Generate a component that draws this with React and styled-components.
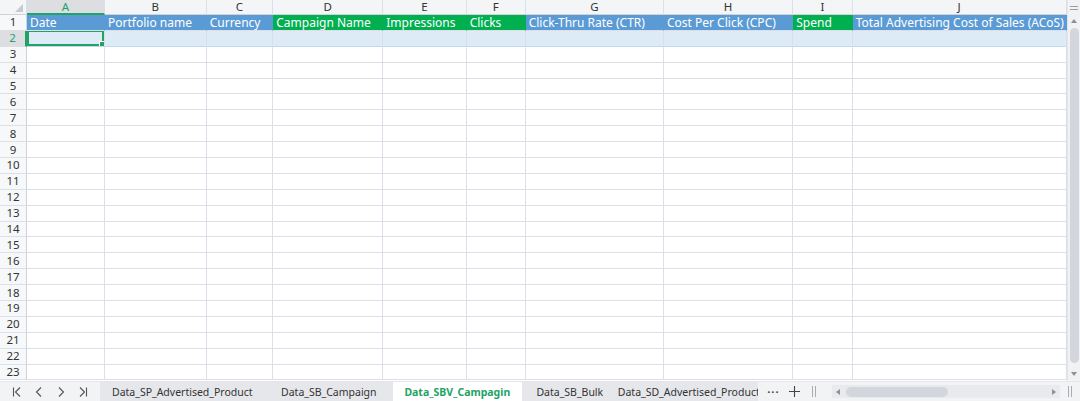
import React from 'react';
import styled, { createGlobalStyle } from 'styled-components';

const GlobalStyle = createGlobalStyle`
  html, body { margin: 0; padding: 0; background: #fff; }
  body { font-family: "Noto Sans", "Noto Sans CJK SC", "Liberation Sans", sans-serif; }
  * { box-sizing: border-box; }
`;

const BLUE = '#5b9bd5';
const GREEN = '#00b050';
const ACCENT = '#21a366';
const LINE = '#dcdfe8';

const columns = [
  { key: 'A', width: 78, title: 'Date', fill: BLUE },
  { key: 'B', width: 101.7, title: 'Portfolio name', fill: BLUE },
  { key: 'C', width: 66.6, title: 'Currency', fill: BLUE },
  { key: 'D', width: 110, title: 'Campaign Name', fill: GREEN },
  { key: 'E', width: 83.4, title: 'Impressions', fill: GREEN },
  { key: 'F', width: 59, title: 'Clicks', fill: GREEN },
  { key: 'G', width: 138.3, title: 'Click-Thru Rate (CTR)', fill: BLUE },
  { key: 'H', width: 129.3, title: 'Cost Per Click (CPC)', fill: BLUE },
  { key: 'I', width: 59.4, title: 'Spend', fill: GREEN },
  { key: 'J', width: 214, title: 'Total Advertising Cost of Sales (ACoS)', fill: BLUE },
];

// last tab is cut off by the tools area, so it is left aligned
const tabs = [
  { name: 'Data_SP_Advertised_Product', w: 165 },
  { name: 'Data_SB_Campaign', w: 128 },
  { name: 'Data_SBV_Campagin', w: 129, active: true },
  { name: 'Data_SB_Bulk', w: 96 },
  { name: 'Data_SD_Advertised_Product', w: 142, start: true },
];

const ROWS = 23;

const Page = styled.div`
  width: 1080px;
  height: 401px;
  display: flex;
  flex-direction: column;
  overflow: hidden;
`;

const SheetArea = styled.div`
  flex: 1;
  display: flex;
  min-height: 0;
`;

const Grid = styled.div`
  flex: 1;
  display: grid;
  grid-template-columns: 27px ${columns.map(c => c.width + 'px').join(' ')};
  grid-template-rows: 15px repeat(${ROWS}, 15.9px);
  overflow: hidden;
  font-size: 12px;
`;

const Corner = styled.div`
  background: #f4f5f7;
  border-right: 1px solid ${LINE};
  border-bottom: 1px solid #cfd2d8;
  position: relative;
  &::after {
    content: '';
    position: absolute;
    right: 3px;
    bottom: 2px;
    border-left: 8px solid transparent;
    border-bottom: 8px solid #c8cacf;
  }
`;

const ColHead = styled.div`
  background: ${p => (p.$selected ? '#dcdee2' : '#f4f5f7')};
  color: ${p => (p.$selected ? ACCENT : '#333')};
  border-right: 1px solid ${LINE};
  border-bottom: ${p => (p.$selected ? `2px solid ${ACCENT}` : '1px solid #cfd2d8')};
  display: flex;
  align-items: center;
  justify-content: center;
  line-height: 14px;
  font-size: 11.5px;
`;

const RowHead = styled.div`
  background: ${p => (p.$selected ? '#dcdee2' : '#f7f8fa')};
  color: ${p => (p.$selected ? ACCENT : '#333')};
  border-right: ${p => (p.$selected ? `2px solid ${ACCENT}` : `1px solid #cfd2d8`)};
  border-bottom: 1px solid ${LINE};
  display: flex;
  align-items: center;
  justify-content: center;
  font-size: 11.5px;
  line-height: 14px;
`;

const Cell = styled.div`
  background: ${p => p.$fill || '#fff'};
  color: #fff;
  border-right: 1px solid ${p => (p.$fill && p.$head ? p.$fill : LINE)};
  border-bottom: 1px solid ${p => (p.$fill && !p.$head ? '#c5d9ec' : LINE)};
  padding: 0 3px;
  display: flex;
  align-items: center;
  white-space: nowrap;
  overflow: hidden;
  font-size: 12px;
  line-height: 15px;
  position: relative;
`;

const Selection = styled.div`
  position: absolute;
  inset: -1px 0 0 0;
  border: 2px solid ${ACCENT};
  &::after {
    content: '';
    position: absolute;
    right: -3px;
    bottom: -3px;
    width: 4px;
    height: 4px;
    background: ${ACCENT};
    border: 1px solid #fff;
  }
`;

const VScroll = styled.div`
  width: 13px;
  background: #f1f2f4;
  border-left: 1px solid #e3e5ea;
  display: flex;
  flex-direction: column;
  align-items: center;
`;

const ScrollMenu = styled.div`
  height: 15px;
  width: 100%;
  display: flex;
  flex-direction: column;
  justify-content: center;
  gap: 2px;
  padding: 0 2px;
  & > span { height: 1px; background: #9a9da4; display: block; }
`;

const ArrowBox = styled.div`
  height: ${p => p.$h || 12}px;
  display: flex;
  align-items: center;
  justify-content: center;
`;

const VThumb = styled.div`
  flex: 1;
  width: 9px;
  margin: 1px 0 4px;
  background: #d3d6dc;
  border-radius: 5px;
`;

const TabBar = styled.div`
  height: 20px;
  background: #f2f3f5;
  display: flex;
  align-items: stretch;
  font-size: 10.5px;
  color: #333;
  border-top: 1px solid #e4e6ea;
`;

const NavGroup = styled.div`
  width: 100px;
  display: flex;
  align-items: center;
  padding-left: 11px;
  gap: 10px;
`;

const NavBtn = styled.svg`
  width: 12px;
  height: 12px;
  stroke: #555;
  fill: none;
  stroke-width: 1.1;
`;

const Tabs = styled.div`
  display: flex;
  background: #e6e7eb;
  width: 660px;
  overflow: hidden;
`;

const Tab = styled.div`
  flex: 0 0 ${p => p.$w}px;
  display: flex;
  align-items: center;
  justify-content: ${p => (p.$start ? 'flex-start' : 'center')};
  white-space: nowrap;
  overflow: hidden;
  background: ${p => (p.$active ? '#fff' : 'transparent')};
  color: ${p => (p.$active ? ACCENT : '#333')};
  font-weight: ${p => (p.$active ? 700 : 400)};
`;

const TabTools = styled.div`
  display: flex;
  align-items: center;
  padding-left: 9px;
  gap: 8px;
  color: #444;
`;

const Dots = styled.span`
  letter-spacing: 1px;
  font-size: 11px;
  font-weight: 700;
`;

const Divider = styled.div`
  width: 4px;
  height: 11px;
  align-self: center;
  border-left: 1px solid #a9acb3;
  border-right: 1px solid #a9acb3;
  margin: 0 ${p => p.$m || 0}px;
`;

const HScroll = styled.div`
  width: 229px;
  margin-left: 5px;
  align-self: center;
  height: 13px;
  background: #e9eaed;
  display: flex;
  align-items: center;
  padding: 0 4px;
`;

const HThumb = styled.div`
  width: 102px;
  height: 10px;
  margin-left: 6px;
  margin-right: auto;
  background: #d3d6dc;
  border-radius: 5px;
`;

const Tri = ({ dir }) => {
  const pts = {
    up: '0,4 3,0 6,4',
    down: '0,0 6,0 3,4',
    left: '4,0 4,6 0,3',
    right: '0,0 0,6 4,3',
  }[dir];
  const vertical = dir === 'up' || dir === 'down';
  return (
    <svg width={vertical ? 6 : 4} height={vertical ? 4 : 6} viewBox={vertical ? '0 0 6 4' : '0 0 4 6'}>
      <polygon points={pts} fill="#8d9098" />
    </svg>
  );
};

export default function App() {
  const rows = [];
  for (let r = 1; r <= ROWS; r++) {
    const selected = r === 2;
    rows.push(<RowHead key={'rh' + r} $selected={selected}>{r}</RowHead>);
    columns.forEach((c, i) => {
      if (r === 1) {
        rows.push(<Cell key={c.key + r} $fill={c.fill} $head>{c.title}</Cell>);
      } else if (r === 2) {
        rows.push(
          <Cell key={c.key + r} $fill="#ddebf7">
            {i === 0 && <Selection />}
          </Cell>
        );
      } else {
        rows.push(<Cell key={c.key + r} />);
      }
    });
  }

  return (
    <Page>
      <GlobalStyle />
      <SheetArea>
        <Grid>
          <Corner />
          {columns.map(c => (
            <ColHead key={c.key} $selected={c.key === 'A'}>{c.key}</ColHead>
          ))}
          {rows}
        </Grid>
        <VScroll>
          <ScrollMenu><span /><span /></ScrollMenu>
          <ArrowBox $h={12}><Tri dir="up" /></ArrowBox>
          <VThumb />
          <ArrowBox $h={14}><Tri dir="down" /></ArrowBox>
        </VScroll>
      </SheetArea>
      <TabBar>
        <NavGroup>
          <NavBtn viewBox="0 0 12 12"><path d="M2.5 1.5v9M9 1.5L4.5 6 9 10.5" /></NavBtn>
          <NavBtn viewBox="0 0 12 12"><path d="M8 1.5L3.5 6 8 10.5" /></NavBtn>
          <NavBtn viewBox="0 0 12 12"><path d="M4 1.5L8.5 6 4 10.5" /></NavBtn>
          <NavBtn viewBox="0 0 12 12"><path d="M3 1.5L7.5 6 3 10.5M9.5 1.5v9" /></NavBtn>
        </NavGroup>
        <Tabs>
          {tabs.map(t => (
            <Tab key={t.name} $w={t.w} $active={t.active} $start={t.start}>{t.name}</Tab>
          ))}
        </Tabs>
        <TabTools>
          <Dots>···</Dots>
          <svg width="13" height="13" viewBox="0 0 13 13">
            <path d="M6.5 1v11M1 6.5h11" stroke="#444" strokeWidth="1.1" />
          </svg>
        </TabTools>
        <Divider $m={11} />
        <HScroll>
          <Tri dir="left" />
          <HThumb />
          <Tri dir="right" />
        </HScroll>
        <Divider $m={8} />
      </TabBar>
    </Page>
  );
}
